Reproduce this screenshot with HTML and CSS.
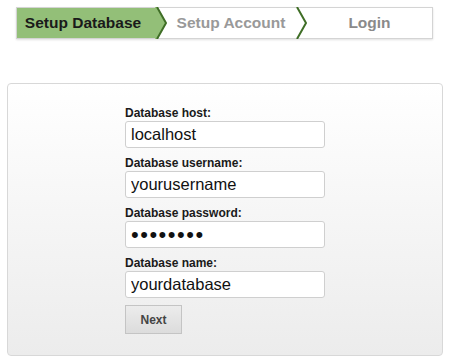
FILE: index.html
```html
<!DOCTYPE html>
<html lang="en">
<head>
    <meta charset="UTF-8">
    <title>Setup Database</title>
    <link rel="stylesheet" href="styles.css">
</head>
<body>
    <!-- Steps -->
    <div class="steps">
        <div class="step active">Setup Database</div>
        <svg class="sep" width="12" height="32" viewBox="0 0 12 32">
            <polygon points="0,0 2,0 11,16 2,32 0,32" fill="#93bf78" />
            <polyline points="2,0 11,16 2,32" fill="none" stroke="#3f6e26" stroke-width="2" />
        </svg>
        <div class="step">Setup Account</div>
        <svg class="sep" width="12" height="32" viewBox="0 0 12 32">
            <polyline points="2,0 11,16 2,32" fill="none" stroke="#3f6e26" stroke-width="2" />
        </svg>
        <div class="step last">Login</div>
    </div>

    <!-- Form -->
    <div class="panel">
        <form class="form">
            <label for="host">Database host:</label>
            <input type="text" id="host" value="localhost" />

            <label for="user">Database username:</label>
            <input type="text" id="user" value="yourusername" />

            <label for="pass">Database password:</label>
            <input type="password" id="pass" class="secret" value="password" />

            <label for="dbname">Database name:</label>
            <input type="text" id="dbname" value="yourdatabase" />

            <button type="button">Next</button>
        </form>
    </div>
</body>
</html>
```

FILE: styles.css
```css
body {
    margin: 0;
    background: #fff;
    font-family: 'Liberation Sans', Arial, sans-serif;
    color: #111;
}

/* Steps bar */
.steps {
    display: flex;
    margin: 7px 0 0 16px;
    width: 417px;
    height: 32px;
    box-sizing: border-box;
    border: 1px solid #d4d4d4;
    box-shadow: 0 1px 2px rgba(0, 0, 0, 0.12);
}

.step {
    display: flex;
    align-items: center;
    justify-content: center;
    font-size: 15.5px;
    font-weight: bold;
    color: #999;
}

.step.active {
    width: 138px;
    padding-right: 6px;
    box-sizing: border-box;
    background: #93bf78;
    color: #1a1a1a;
}

.step:nth-child(3) {
    width: 128px;
}

.step.last {
    flex: 1;
    color: #8a8a8a;
}

.sep {
    flex-shrink: 0;
    margin-top: -1px;
}

/* Panel */
.panel {
    margin: 44px 0 0 7px;
    width: 436px;
    height: 273px;
    box-sizing: border-box;
    border: 1px solid #d8d8d8;
    border-radius: 4px;
    background: linear-gradient(#fff, #ececec);
    padding: 22px 0 0 117px;
}

.form {
    display: flex;
    flex-direction: column;
    align-items: flex-start;
}

label {
    font-size: 12px;
    font-weight: bold;
    color: #1a1a1a;
    line-height: 14px;
}

input {
    width: 200px;
    height: 27px;
    box-sizing: border-box;
    margin: 1px 0 8px;
    padding: 0 5px;
    border: 1px solid #cfcfcf;
    border-radius: 3px;
    font-family: 'Liberation Sans', Arial, sans-serif;
    font-size: 16.5px;
    color: #111;
    background: #fff;
}

input.secret {
    font-size: 22px;
    letter-spacing: 1.5px;
}

button {
    margin-top: -1px;
    width: 57px;
    height: 29px;
    border: 1px solid #c4c4c4;
    background: linear-gradient(#ececec, #dcdcdc);
    font-family: 'Liberation Sans', Arial, sans-serif;
    font-size: 12px;
    font-weight: bold;
    color: #444;
}
```
